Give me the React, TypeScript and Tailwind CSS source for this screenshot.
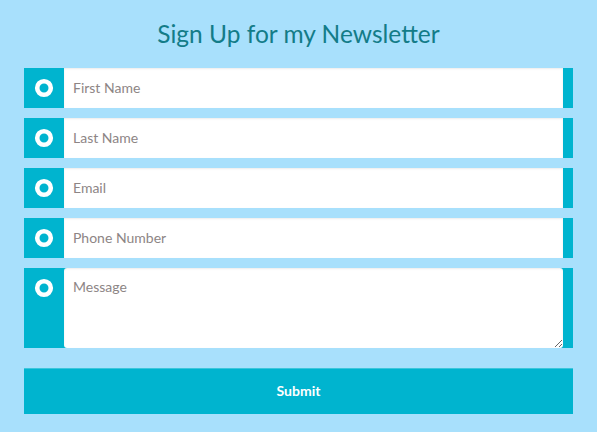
import React from "react";

const Ring = () => (
  <svg width="20" height="20" viewBox="0 0 20 20">
    <circle cx="10" cy="10" r="6.8" fill="none" stroke="white" strokeWidth="4.6" />
  </svg>
);

const fields = ["First Name", "Last Name", "Email", "Phone Number"];

export default function App() {
  return (
    <div className="min-h-[432px] w-full bg-[#a8e0fc] px-[24px] pt-[18px]" style={{ fontFamily: "Lato, 'Open Sans', sans-serif" }}>
      <h1 className="text-center text-[24.5px] leading-[32px] text-[#137c88] mb-[18px]">Sign Up for my Newsletter</h1>
      <div className="flex flex-col gap-[10px]">
        {fields.map((f) => (
          <div key={f} className="flex h-[40px] bg-[#00b4cf] pr-[10px]">
            <div className="w-[40px] flex items-center justify-center">
              <Ring />
            </div>
            <input
              placeholder={f}
              className="flex-1 bg-white px-[9px] pb-[2px] text-[14px] text-[#555] placeholder:text-[#8d8585] outline-none shadow-[inset_0_1px_2px_rgba(0,0,0,0.08)]"
            />
          </div>
        ))}
        <div className="flex h-[80px] bg-[#00b4cf] pr-[10px]">
          <div className="w-[40px] flex items-start justify-center pt-[10px]">
            <Ring />
          </div>
          <textarea
            placeholder="Message"
            className="flex-1 bg-white px-[9px] pt-[10px] pb-[8px] text-[14px] leading-[18px] placeholder:text-[#8d8585] outline-none rounded-[3px] shadow-[inset_0_1px_2px_rgba(0,0,0,0.08)] resize-y"
          />
        </div>
      </div>
      <button className="mt-[20px] w-full h-[46px] bg-[#00b4cf] border-t border-[#3cc6dc] pb-[2px] text-white font-bold text-[14px]">
        Submit
      </button>
    </div>
  );
}
